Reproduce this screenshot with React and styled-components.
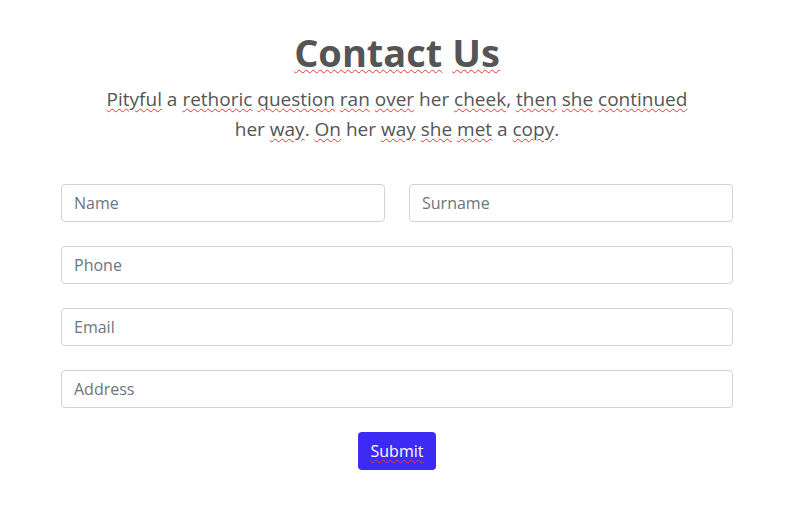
import styled, { createGlobalStyle } from "styled-components";

const GlobalStyle = createGlobalStyle`
  body {
    margin: 0;
    background: #ffffff;
    font-family: "Open Sans", "Noto Sans", sans-serif;
  }
`;

const Page = styled.main`
  width: 794px;
  padding-top: 28px;
  display: flex;
  flex-direction: column;
  align-items: center;
`;

const Title = styled.h1`
  margin: 0;
  font-size: 38px;
  line-height: 48px;
  font-weight: 700;
  color: #555555;
`;

const Lead = styled.p`
  margin: 8px 0 0;
  width: 600px;
  text-align: center;
  font-size: 19px;
  line-height: 30px;
  color: #555555;
`;

const Typo = styled.span`
  text-decoration: underline wavy #e53935;
  text-decoration-thickness: 1px;
  text-underline-offset: 2px;
`;

const Form = styled.form`
  margin-top: 40px;
  width: 672px;
  display: flex;
  flex-direction: column;
  gap: 24px;
`;

const Row = styled.div`
  display: grid;
  grid-template-columns: ${(p) => (p.$split ? "1fr 1fr" : "1fr")};
  gap: 24px;
`;

const Input = styled.input`
  box-sizing: border-box;
  height: 38px;
  width: 100%;
  padding: 0 12px;
  border: 1px solid #ced4da;
  border-radius: 4px;
  font-family: inherit;
  font-size: 16px;
  color: #495057;
  background: #ffffff;

  &::placeholder {
    color: #6c757d;
  }
`;

const Actions = styled.div`
  display: flex;
  justify-content: center;
`;

const Button = styled.button`
  height: 38px;
  padding: 0 13px;
  border: none;
  border-radius: 4px;
  background: #3d2bf5;
  color: #ffffff;
  font-family: inherit;
  font-size: 16px;
`;

export default function App() {
  return (
    <>
      <GlobalStyle />
      <Page>
        <Title>
          <Typo>Contact</Typo> <Typo>Us</Typo>
        </Title>
        <Lead>
          <Typo>Pityful</Typo> a <Typo>rethoric</Typo> <Typo>question</Typo>{" "}
          <Typo>ran</Typo> <Typo>over</Typo> her <Typo>cheek</Typo>,{" "}
          <Typo>then</Typo> <Typo>she</Typo> <Typo>continued</Typo> her{" "}
          <Typo>way</Typo>. <Typo>On</Typo> her <Typo>way</Typo>{" "}
          <Typo>she</Typo> <Typo>met</Typo> a <Typo>copy</Typo>.
        </Lead>
        <Form onSubmit={(e) => e.preventDefault()}>
          <Row $split>
            <Input placeholder="Name" />
            <Input placeholder="Surname" />
          </Row>
          <Row>
            <Input placeholder="Phone" />
          </Row>
          <Row>
            <Input placeholder="Email" />
          </Row>
          <Row>
            <Input placeholder="Address" />
          </Row>
          <Actions>
            <Button type="submit">
              <Typo>Submit</Typo>
            </Button>
          </Actions>
        </Form>
      </Page>
    </>
  );
}
